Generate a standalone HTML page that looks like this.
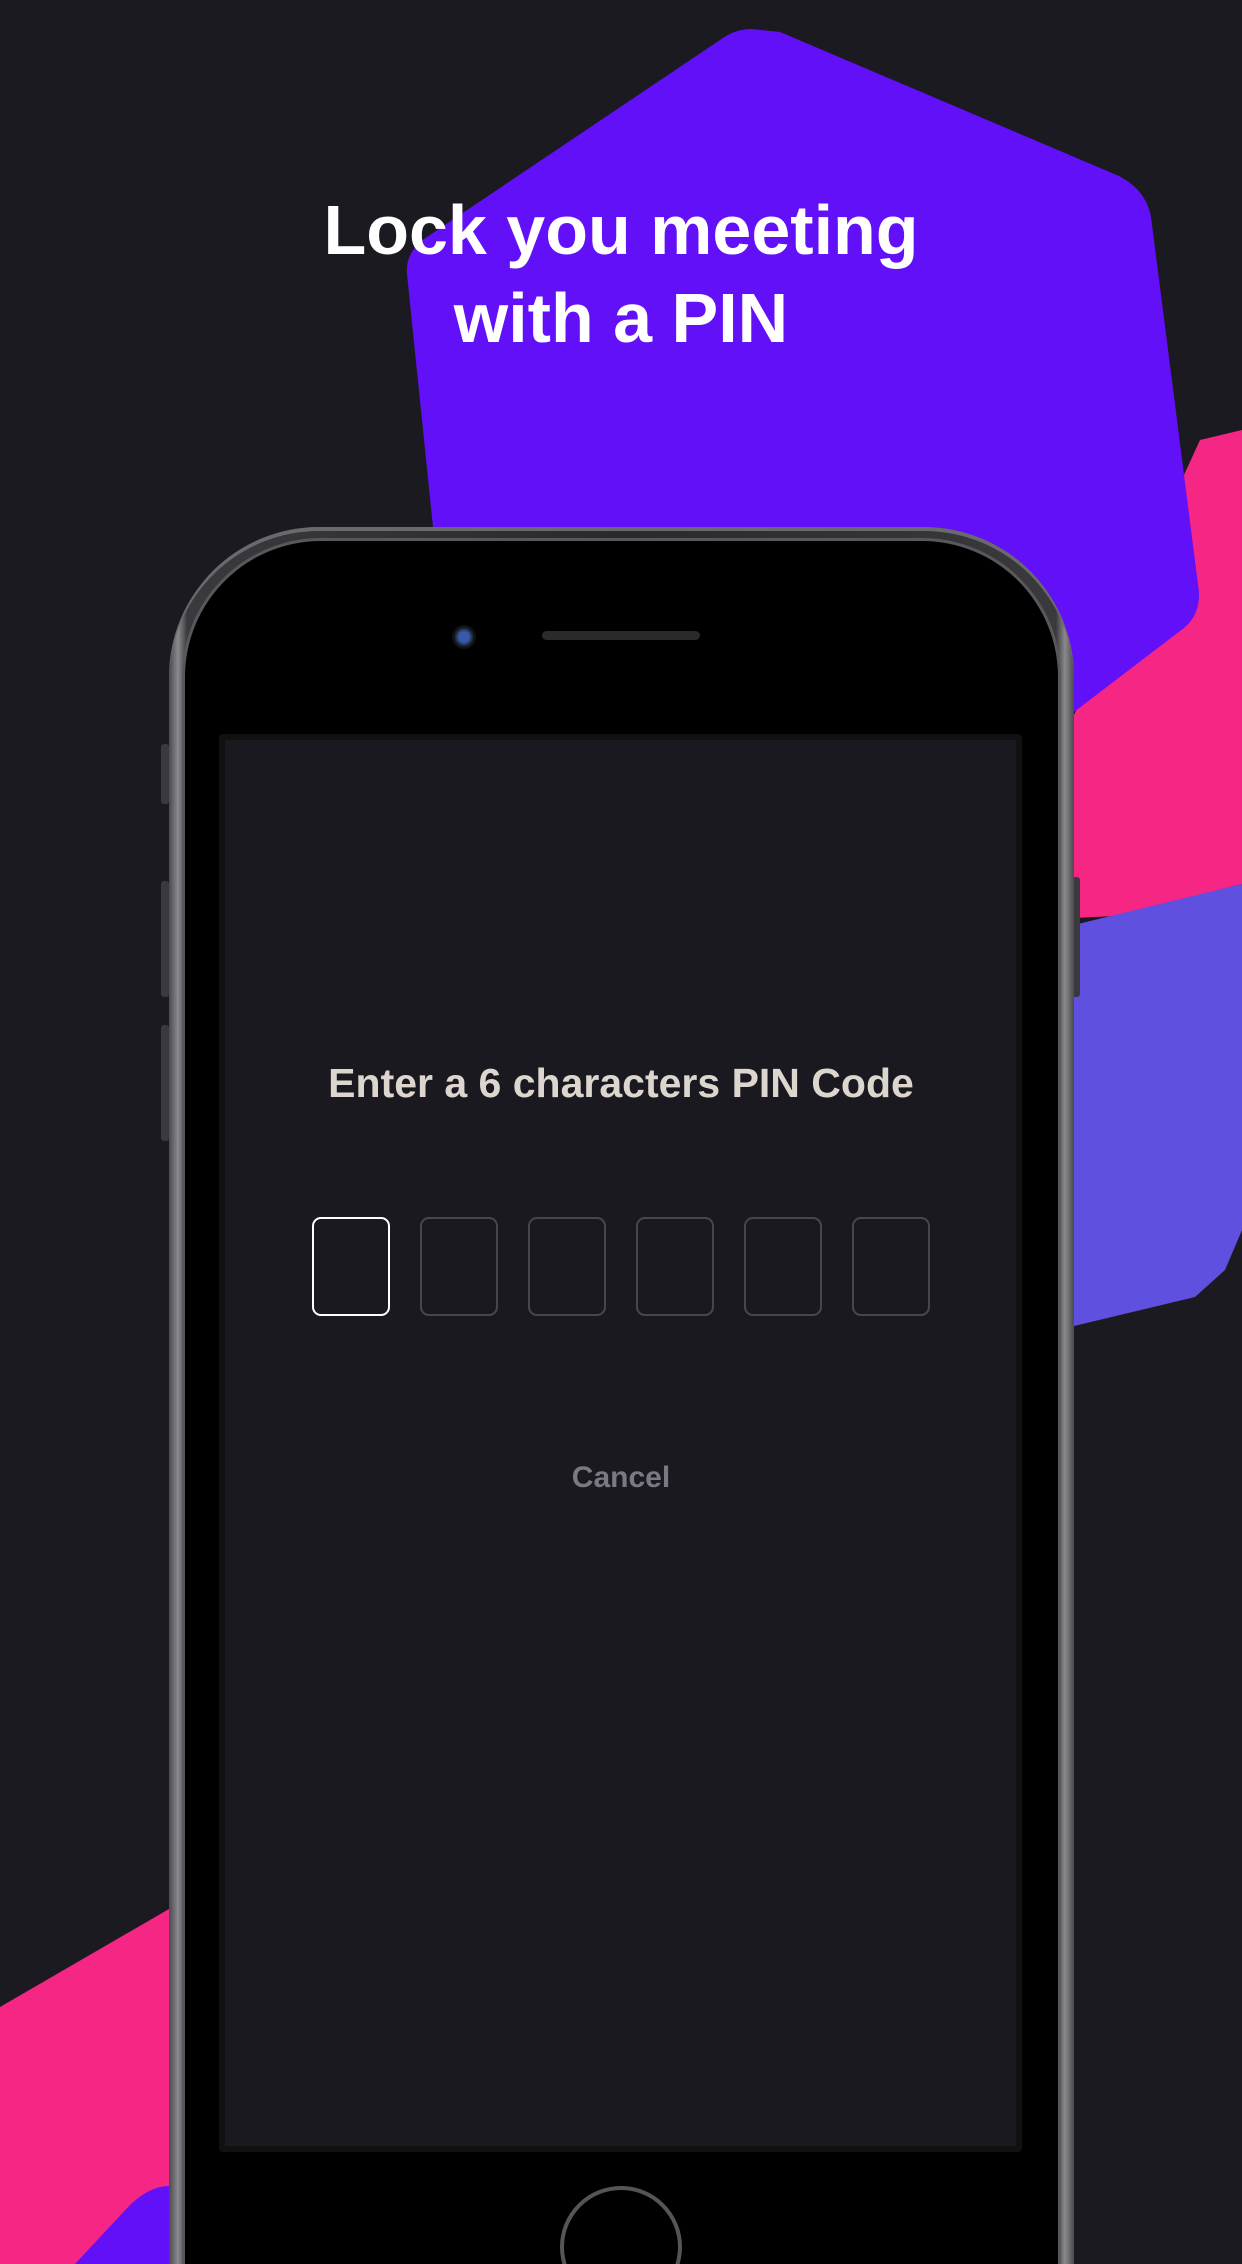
<!DOCTYPE html>
<html><head><meta charset="utf-8"><style>
html,body{margin:0;padding:0;width:1242px;height:2264px;overflow:hidden}
body{background:#1c1a21;position:relative;font-family:"Liberation Sans",sans-serif}
.abs{position:absolute}
.title{left:0;width:1242px;top:186px;text-align:center;color:#fff;font-weight:bold;font-size:70px;line-height:88px}
.phone{left:169px;top:527px;width:905px;height:1737px;border-radius:150px 150px 0 0;background:linear-gradient(90deg,#4a4a4e,#8a8a8e 1%,#3a3a3e 2%,#2a2a2e 50%,#3a3a3e 98%,#8a8a8e 99%,#4a4a4e);box-shadow:inset 0 4px 0 #6a6a6e}
.bezel{left:16px;top:14px;right:16px;bottom:0;border-radius:136px 136px 0 0;background:#000;box-shadow:0 0 0 3px #58585c}
.screen{left:219px;top:734px;width:803px;height:1418px;background:#1b1920;border:6px solid #111;box-sizing:border-box;border-radius:4px}
.box{top:1217px;width:78px;height:99px;border:2px solid #48464d;border-radius:9px;box-sizing:border-box}
.btn{background:#3a3a3e;width:8px;border-radius:3px}
</style></head><body>
<svg class="abs" style="left:0;top:0" width="1242" height="2264">
<polygon fill="#f52684" points="1074,715 1200,440 1242,430 1242,884 1115,916 1074,918"/>
<polygon fill="#5f50e0" points="1074,925 1242,884 1242,1230 1225,1270 1195,1297 1074,1326"/>
<path fill="#6210f8" d="M751,29 L780,32 L1119,176 Q1146,190 1151,217 L1199,592 Q1200,615 1184,628 L1074,712 L433,527 L407,274 Q405,250 430,235 L720,40 Q735,29 751,29 Z"/>
<polygon fill="#f52684" points="0,2007 169,1909 169,2264 0,2264"/>
<path fill="#6210f8" d="M75,2264 L130,2205 Q150,2186 169,2186 L169,2264 Z"/>
</svg>
<div class="abs title">Lock you meeting<br>with a PIN</div>
<div class="abs btn" style="left:161px;top:744px;height:60px"></div>
<div class="abs btn" style="left:161px;top:881px;height:116px"></div>
<div class="abs btn" style="left:161px;top:1025px;height:116px"></div>
<div class="abs btn" style="left:1072px;top:877px;height:120px"></div>
<div class="abs phone"><div class="abs bezel"></div></div>
<div class="abs" style="left:452px;top:625px;width:24px;height:24px;border-radius:50%;background:radial-gradient(#3a5aa8 30%,#111 60%)"></div>
<div class="abs" style="left:542px;top:631px;width:158px;height:9px;border-radius:5px;background:#2a2a2c"></div>
<div class="abs screen"></div>
<div class="abs" style="left:0;width:1242px;top:1056px;text-align:center;color:#ddd6cf;font-size:41px;font-weight:bold;line-height:54px">Enter a 6 characters PIN Code</div>
<div class="abs box" style="left:312px;border-color:#fff"></div>
<div class="abs box" style="left:420px"></div>
<div class="abs box" style="left:528px"></div>
<div class="abs box" style="left:636px"></div>
<div class="abs box" style="left:744px"></div>
<div class="abs box" style="left:852px"></div>
<div class="abs" style="left:0;width:1242px;top:1458px;text-align:center;color:#7a7880;font-size:30px;font-weight:bold;line-height:40px">Cancel</div>
<div class="abs" style="left:560px;top:2186px;width:122px;height:122px;border-radius:50%;border:4px solid #555;box-sizing:border-box;background:#000"></div>
</body></html>
